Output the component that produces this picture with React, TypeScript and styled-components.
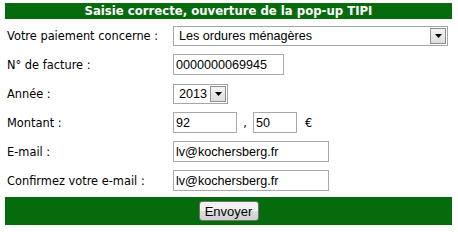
import { FC } from 'react'
import styled, { createGlobalStyle } from 'styled-components'

const GlobalStyle = createGlobalStyle`
  body {
    margin: 0;
    background: #fff;
    font-family: "DejaVu Sans", Verdana, sans-serif;
  }
`

const rows = [
  { label: 'Votre paiement concerne :', kind: 'motif' },
  { label: 'N° de facture :', kind: 'facture' },
  { label: 'Année :', kind: 'annee' },
  { label: 'Montant :', kind: 'montant' },
  { label: 'E-mail :', kind: 'email' },
  { label: 'Confirmez votre e-mail :', kind: 'email2' }
]

const SelectBox: FC<{ value: string; width: number }> = ({ value, width }) => (
  <SelectWrap style={{ width }}>
    <SelectValue>{value}</SelectValue>
    <ArrowBox>
      <svg width="7" height="4" viewBox="0 0 7 4">
        <path d="M0 0h7L3.5 4z" fill="#000" />
      </svg>
    </ArrowBox>
  </SelectWrap>
)

const Field: FC<{ kind: string }> = ({ kind }) => {
  switch (kind) {
    case 'motif':
      return <SelectBox value="Les ordures ménagères" width={275} />
    case 'facture':
      return <TextInput $w={111} defaultValue="0000000069945" />
    case 'annee':
      return <SelectBox value="2013" width={55} />
    case 'montant':
      return (
        <Amount>
          <TextInput $w={64} defaultValue="92" />
          <Sep>,</Sep>
          <TextInput $w={44} defaultValue="50" />
          <Euro>€</Euro>
        </Amount>
      )
    default:
      return <TextInput $w={156} defaultValue="lv@kochersberg.fr" />
  }
}

const App: FC = () => (
  <>
    <GlobalStyle />
    <Form>
      <Header>Saisie correcte, ouverture de la pop-up TIPI</Header>
      <Rows>
        {rows.map((r) => (
          <Row key={r.kind}>
            <Label>{r.label}</Label>
            <Field kind={r.kind} />
          </Row>
        ))}
      </Rows>
      <Footer>
        <Button type="button">Envoyer</Button>
      </Footer>
    </Form>
  </>
)

const Form = styled.div`
  width: 447px;
  margin: 3px 0 0 5px;
  display: flex;
  flex-direction: column;
`

const Header = styled.div`
  height: 16px;
  background: #066b0d;
  color: #fff;
  font-weight: bold;
  font-size: 11.7px;
  line-height: 16px;
  text-align: center;
`

const Rows = styled.div`
  display: flex;
  flex-direction: column;
  padding-top: 2px;
`

const Row = styled.div`
  height: 29px;
  display: grid;
  grid-template-columns: 168px 1fr;
  align-items: center;
`

const Label = styled.div`
  padding-left: 2px;
  font-size: 11.4px;
  color: #000;
`

const TextInput = styled.input<{ $w: number }>`
  box-sizing: border-box;
  width: ${({ $w }) => $w}px;
  height: 21px;
  border: 1px solid #a9a9a9;
  padding: 0 2px;
  font-family: "Liberation Sans", Arial, sans-serif;
  font-size: 12.6px;
  color: #000;
  outline: none;
`

const SelectWrap = styled.div`
  box-sizing: border-box;
  height: 20px;
  border: 1px solid #a5a5a5;
  padding: 1px;
  display: flex;
  align-items: center;
  background: #fff;
`

const SelectValue = styled.span`
  flex: 1;
  padding-left: 4px;
  font-family: "Liberation Sans", Arial, sans-serif;
  font-size: 12.6px;
  color: #000;
  white-space: nowrap;
  overflow: hidden;
`

const ArrowBox = styled.span`
  box-sizing: border-box;
  width: 16px;
  height: 16px;
  border: 1px solid #8e8f8f;
  background: linear-gradient(#f4f4f4, #dcdcdc);
  display: flex;
  align-items: center;
  justify-content: center;
`

const Amount = styled.div`
  display: flex;
  align-items: center;
`

const Sep = styled.span`
  width: 16px;
  text-align: center;
  font-size: 11.4px;
`

const Euro = styled.span`
  margin-left: 8px;
  font-size: 11.4px;
`

const Footer = styled.div`
  margin-top: 2px;
  height: 28px;
  background: #066b0d;
  display: flex;
  align-items: center;
  justify-content: center;
`

const Button = styled.button`
  box-sizing: border-box;
  width: 60px;
  height: 20px;
  padding: 0;
  border: 1px solid #707070;
  border-radius: 3px;
  background: linear-gradient(#f2f2f2 50%, #dddddd 50%, #cfcfcf);
  font-family: "Liberation Sans", Arial, sans-serif;
  font-size: 13px;
  color: #000;
`

export default App
